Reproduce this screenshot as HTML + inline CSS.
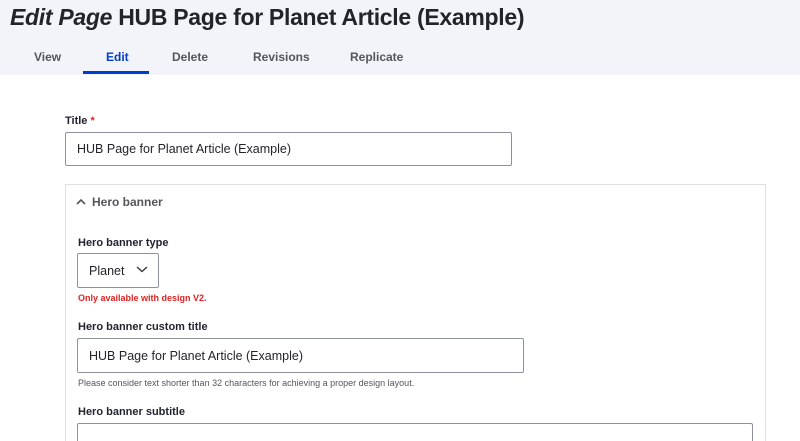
<!DOCTYPE html>
<html><head><meta charset="utf-8"><style>
*{box-sizing:border-box;margin:0;padding:0}
html,body{width:800px;height:441px;overflow:hidden}
body{background:#fff;font-family:"Liberation Sans",sans-serif;color:#222330;position:relative}
.hdr{position:absolute;left:0;top:0;width:800px;height:75px;background:#f3f4f9}
h1{position:absolute;left:10px;top:4px;font-size:23px;font-weight:bold;color:#232429;white-space:nowrap;letter-spacing:-0.3px}
.tab{position:absolute;top:50px;font-size:12px;font-weight:bold;color:#55565b}
.ul{position:absolute;left:83px;top:71px;width:66px;height:3px;background:#003ecc}
.lbl{position:absolute;font-size:11px;font-weight:bold;color:#222330}
.inp{position:absolute;border:1px solid #8e929c;border-radius:2px;background:#fff;font-size:12.5px;padding-left:11px;display:flex;align-items:center;color:#232429}
.box{position:absolute;left:65px;top:184px;width:701px;height:270px;border:1px solid #dedfe4;background:#fff}
</style></head><body>
<div class="hdr"></div>
<h1><i>Edit Page</i> HUB Page for Planet Article (Example)</h1>
<div class="tab" style="left:34px">View</div>
<div class="tab" style="left:106px;color:#003ecc">Edit</div>
<div class="tab" style="left:172px">Delete</div>
<div class="tab" style="left:253px">Revisions</div>
<div class="tab" style="left:350px">Replicate</div>
<div class="ul"></div>
<div class="lbl" style="left:65px;top:115px">Title<span style="color:#dc2323"> *</span></div>
<div class="inp" style="left:65px;top:132px;width:447px;height:34px">HUB Page for Planet Article (Example)</div>
<div class="box"></div>
<svg style="position:absolute;left:75px;top:197px" width="12" height="10"><path d="M2 7 L6 3 L10 7" stroke="#55565b" stroke-width="1.6" fill="none"/></svg>
<div style="position:absolute;left:92px;top:195px;font-size:12px;font-weight:bold;color:#55565b">Hero banner</div>
<div class="lbl" style="left:78px;top:237px">Hero banner type</div>
<div class="inp" style="left:77px;top:253px;width:82px;height:35px">Planet</div>
<svg style="position:absolute;left:136px;top:265px" width="12" height="8"><path d="M1 2 L6 6.5 L11 2" stroke="#333" stroke-width="1.3" fill="none"/></svg>
<div style="position:absolute;left:78px;top:293px;font-size:9px;font-weight:bold;color:#dc2323">Only available with design V2.</div>
<div class="lbl" style="left:78px;top:321px">Hero banner custom title</div>
<div class="inp" style="left:77px;top:338px;width:447px;height:35px">HUB Page for Planet Article (Example)</div>
<div style="position:absolute;left:78px;top:378px;font-size:9px;color:#55565b">Please consider text shorter than 32 characters for achieving a proper design layout.</div>
<div class="lbl" style="left:78px;top:406px">Hero banner subtitle</div>
<div class="inp" style="left:77px;top:423px;width:676px;height:35px"></div>
</body></html>
